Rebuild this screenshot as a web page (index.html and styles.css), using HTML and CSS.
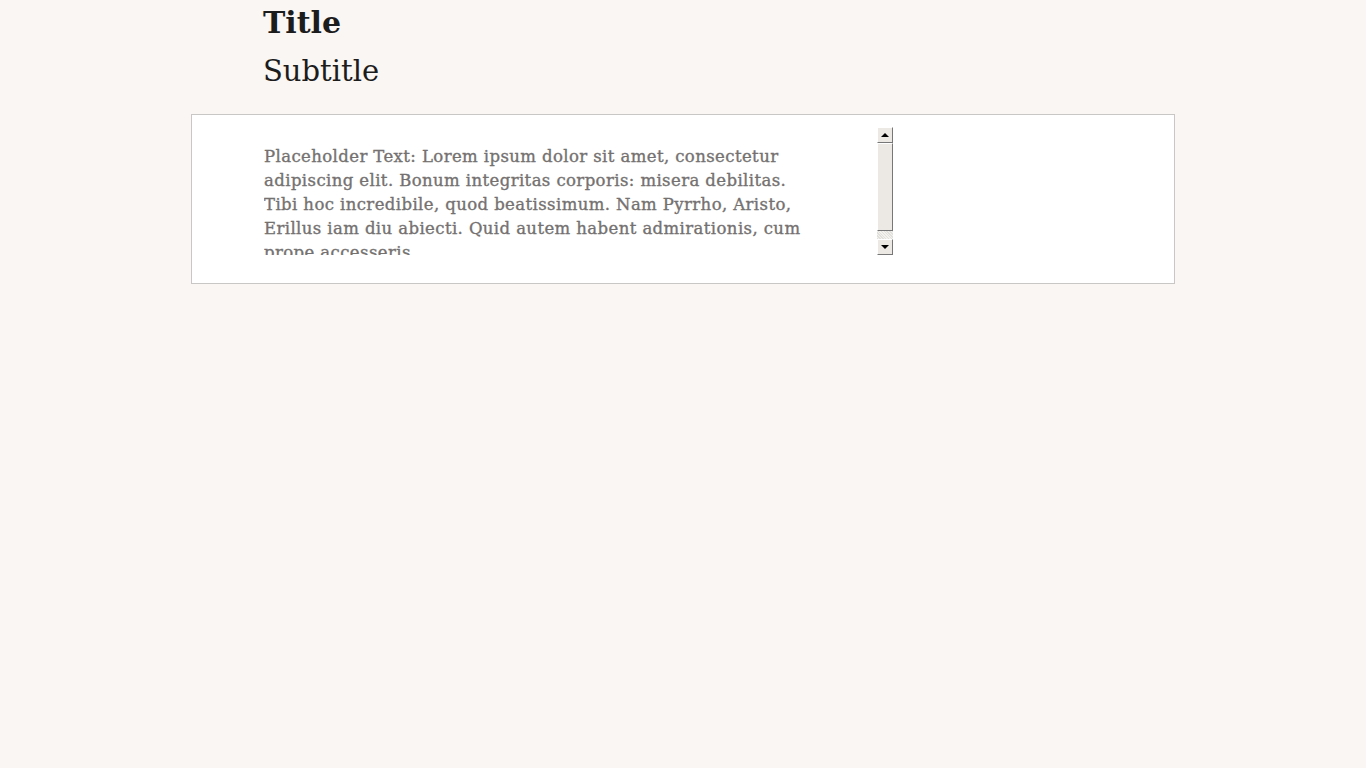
FILE: index.html
```html
<!DOCTYPE html>
<html>
<head>
<meta charset="utf-8">
<title>Title</title>
<link rel="stylesheet" href="styles.css">
</head>
<body>
<header class="head">
  <h1 class="title">Title</h1>
  <h2 class="subtitle">Subtitle</h2>
</header>
<main class="box">
  <div class="field">
    <div class="text">Placeholder Text: Lorem ipsum dolor sit amet, consectetur<br>adipiscing elit. Bonum integritas corporis: misera debilitas.<br>Tibi hoc incredibile, quod beatissimum. Nam Pyrrho, Aristo,<br>Erillus iam diu abiecti. Quid autem habent admirationis, cum<br>prope accesseris</div>
    <div class="scrollbar">
      <div class="sb-btn"><span class="arrow up"></span></div>
      <div class="sb-thumb"></div>
      <div class="sb-track"></div>
      <div class="sb-btn"><span class="arrow down"></span></div>
    </div>
  </div>
</main>
</body>
</html>
```
FILE: styles.css
```css
html, body {
  margin: 0;
  padding: 0;
  background: #faf6f3;
}
body {
  font-family: "DejaVu Serif", serif;
  color: #1c1c1c;
}
.head {
  width: 984px;
  margin: 0 auto;
  padding: 1px 0 0 72px;
  box-sizing: border-box;
}
.title {
  margin: 0;
  font-size: 30px;
  line-height: 44px;
  font-weight: bold;
}
.subtitle {
  margin: 1px 0 0;
  font-size: 29px;
  line-height: 50px;
  font-weight: normal;
}
.box {
  width: 984px;
  height: 170px;
  box-sizing: border-box;
  margin: 18px auto 0;
  background: #fff;
  border: 1px solid #c9c7c6;
  padding: 12px 0 0 72px;
}
.field {
  display: flex;
  height: 128px;
}
.text {
  width: 560px;
  padding-top: 18px;
  margin-right: 53px;
  height: 110px;
  overflow: hidden;
  white-space: nowrap;
  font-size: 16.5px;
  letter-spacing: 0.4px;
  line-height: 24px;
  color: #747170;
  -webkit-text-stroke: 0.35px #747170;
}
.scrollbar {
  width: 16px;
  display: flex;
  flex-direction: column;
  background: #f0eeea;
}
.sb-btn {
  height: 16px;
  box-sizing: border-box;
  background: #ece9e4;
  border-top: 1px solid #fff;
  border-left: 1px solid #fff;
  border-right: 1px solid #777;
  border-bottom: 1px solid #777;
  display: flex;
  align-items: center;
  justify-content: center;
}
.sb-thumb {
  height: 88px;
  box-sizing: border-box;
  background: #ece9e4;
  border-top: 1px solid #fff;
  border-left: 1px solid #fff;
  border-right: 1px solid #777;
  border-bottom: 1px solid #777;
}
.sb-track {
  flex: 1;
  background-color: #f4f2ee;
  background-image: repeating-linear-gradient(45deg, #e2e0dc 0 1px, transparent 1px 2px);
}
.arrow {
  width: 0;
  height: 0;
  border-left: 4px solid transparent;
  border-right: 4px solid transparent;
}
.arrow.up { border-bottom: 4px solid #000; }
.arrow.down { border-top: 4px solid #000; }
```
